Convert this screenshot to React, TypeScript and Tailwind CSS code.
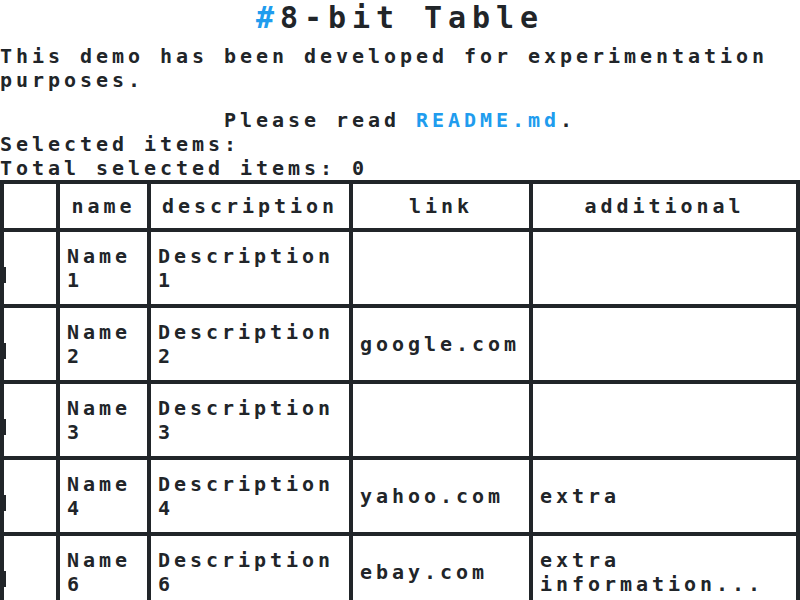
import React from "react";

const rows = [
  { name: "Name 1", description: "Description 1", link: "", additional: "" },
  { name: "Name 2", description: "Description 2", link: "google.com", additional: "" },
  { name: "Name 3", description: "Description 3", link: "", additional: "" },
  { name: "Name 4", description: "Description 4", link: "yahoo.com", additional: "extra" },
  { name: "Name 6", description: "Description 6", link: "ebay.com", additional: "extra information..." },
];

export default function App() {
  return (
    <div className="min-h-screen bg-white text-[#212529] font-['DejaVu_Sans_Mono',monospace] font-bold text-[20px] leading-[24px] tracking-[3.96px]">
      <h1 className="text-center text-[30px] leading-[35px] tracking-[5.94px] mb-[9px] font-bold">
        <span className="text-[#209cee]">#</span>8-bit Table
      </h1>
      <p className="mb-[16px]">
        This demo has been developed for experimentation purposes.
      </p>
      <p className="text-center">
        Please read <span className="text-[#209cee]">README.md</span>.
      </p>
      <div>Selected items:</div>
      <div>Total selected items: 0</div>
      <div className="grid grid-cols-[52px_87px_198px_176px_263px] auto-rows-[72px] grid-rows-[44px] gap-[4px] p-[4px] bg-[#212529] w-[800px]">
        <div className="bg-white" />
        <div className="bg-white flex items-center justify-center">name</div>
        <div className="bg-white flex items-center justify-center">description</div>
        <div className="bg-white flex items-center justify-center">link</div>
        <div className="bg-white flex items-center justify-center">additional</div>
        {rows.map((r) => (
          <React.Fragment key={r.name}>
            <div className="bg-white relative">
              <div className="absolute left-0 top-[35px] w-[2px] h-[16px] bg-[#212529]" />
            </div>
            <div className="bg-white flex items-center pl-[7px] pr-[8px]">{r.name}</div>
            <div className="bg-white flex items-center pl-[7px] pr-[8px]">{r.description}</div>
            <div className="bg-white flex items-center pl-[7px] pr-[8px] whitespace-nowrap">{r.link}</div>
            <div className="bg-white flex items-center pl-[7px] pr-[8px]">{r.additional}</div>
          </React.Fragment>
        ))}
      </div>
    </div>
  );
}
